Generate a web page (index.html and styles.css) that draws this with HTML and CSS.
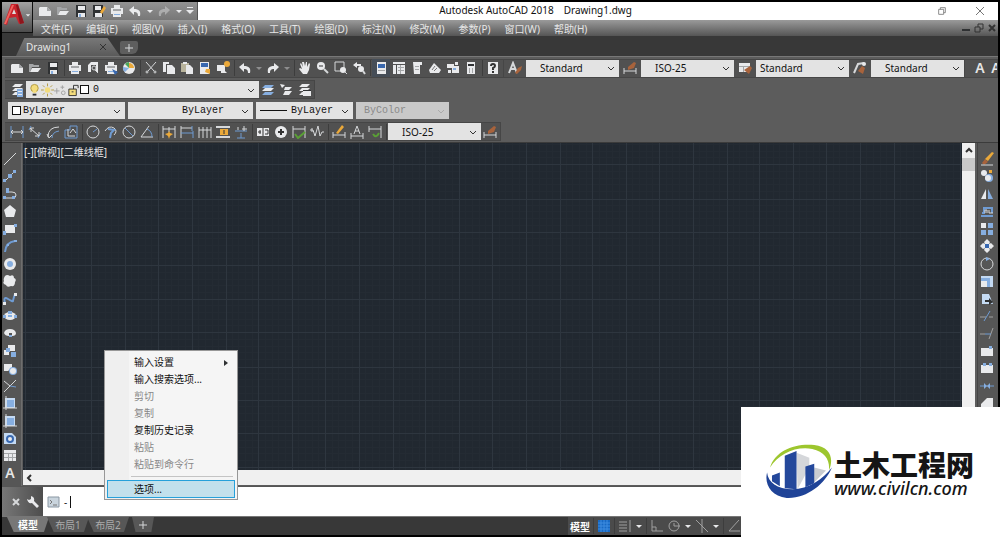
FILE: index.html
```html
<!DOCTYPE html>
<html lang="zh-CN">
<head>
    <meta charset="UTF-8">
    <meta name="viewport" content="width=device-width, initial-scale=1.0">
    <title>Autodesk AutoCAD 2018 - Drawing1.dwg</title>
    <link rel="stylesheet" href="styles.css">
</head>
<body>

<!-- Shared icons -->
<svg class="defs" aria-hidden="true">
    <symbol id="i-new" viewBox="0 0 14 14"><path class="w" d="M2 3h7l4 4v5H1V4z"/><path class="g" d="M9 3v4h4z"/></symbol>
    <symbol id="i-open" viewBox="0 0 14 14"><path class="g" d="M1 3h4l1 1h5v2H4l-2 5H1z"/><path class="w" d="M4 7h9l-3 4H2z"/></symbol>
    <symbol id="i-save" viewBox="0 0 14 14"><path class="k" d="M2 1h10v12H2z"/><path class="w" d="M4 2h7v4H4zM4 9h7v4H4z"/><path class="b" d="M5 10h2v3H5z"/></symbol>
    <symbol id="i-print" viewBox="0 0 14 14"><path class="w" d="M4 1h6v3h3v6h-2v3H3v-3H1V4h3z"/><path class="g" d="M3 5h8v2H3z"/><path class="b" d="M4 10h6v1H4z"/></symbol>
    <symbol id="i-undo" viewBox="0 0 14 14"><path class="w" d="M1 6l5-4v3c5 0 7 2 6 7h-2c0-3-1-4-4-4v3z"/></symbol>
    <symbol id="i-redo" viewBox="0 0 14 14"><path class="w" d="M13 6L8 2v3C3 5 1 7 2 12h2c0-3 1-4 4-4v3z"/></symbol>
    <symbol id="i-down" viewBox="0 0 8 8"><path class="w" d="M1 3h6L4 6z"/></symbol>
    <symbol id="i-chev" viewBox="0 0 10 10"><path class="lk" d="M2 4l3 3 3-3"/></symbol>
    <symbol id="i-restore" viewBox="0 0 12 12"><path class="lc" d="M2 4h6v6H2zM4 4V2h6v6H8"/></symbol>
    <symbol id="i-dimstyle" viewBox="0 0 14 14"><path class="l" d="M1 7v6M13 7v6M1 10h12"/><path class="r" d="M5 6l6-5 2 1-2 5-6 2z"/></symbol>
    <symbol id="i-layers" viewBox="0 0 14 14"><path class="w" d="M5 1h8l-3 3H2zM5 5h8l-3 3H2zM5 9h8l-3 3H2z"/></symbol>
    <symbol id="i-block" viewBox="0 0 14 14"><path class="bl" d="M2 2h10v10H2z"/><path class="b" d="M4 4h7v7H4z"/><path class="l" d="M3 0v14M0 12h14"/></symbol>
</svg>

<div class="app">
    <header class="top">
        <button class="app-btn" aria-label="Application menu">
            <svg class="logo-a" viewBox="0 0 22 24"><path fill="#c8232c" d="M1 21L8 1h7l6 19-5 1-3-7-7 1-2 7z"/><path fill="#f0635f" d="M9 2l2 0-5 12-3 7-2 0z"/><path fill="#8e151c" d="M13 2h2l6 18-4 1z"/><path fill="#ddd" d="M11 6l2 5H9z"/></svg>
            <svg class="i8"><use href="#i-down"/></svg>
        </button>
        <div class="top-rows">
            <div class="title-row">
                <div class="quick">
                    <button class="tb" aria-label="New"><svg><use href="#i-new"/></svg></button>
                    <button class="tb" aria-label="Open"><svg><use href="#i-open"/></svg></button>
                    <button class="tb" aria-label="Save"><svg><use href="#i-save"/></svg></button>
                    <button class="tb" aria-label="Save as"><svg viewBox="0 0 14 14"><path class="k" d="M1 1h10v12H1z"/><path class="w" d="M3 2h6v4H3zM3 9h7v4H3z"/><path class="o" d="M8 8l4-6 2 2-4 6z"/></svg></button>
                    <button class="tb" aria-label="Plot"><svg><use href="#i-print"/></svg></button>
                    <button class="tb" aria-label="Undo"><svg><use href="#i-undo"/></svg></button>
                    <button class="tb slim" aria-label="Undo list"><svg class="i8"><use href="#i-down"/></svg></button>
                    <button class="tb dim" aria-label="Redo"><svg><use href="#i-redo"/></svg></button>
                    <button class="tb slim" aria-label="Redo list"><svg class="i8"><use href="#i-down"/></svg></button>
                    <button class="tb slim" aria-label="Customize"><svg class="i8" viewBox="0 0 8 8"><path class="w" d="M1 0h6v1H1zM0 3h8L4 7z"/></svg></button>
                </div>
                <h1 class="title"><span>Autodesk AutoCAD 2018</span><span>Drawing1.dwg</span></h1>
                <div class="win-btns">
                    <button class="tb" aria-label="Restore"><svg class="i10"><use href="#i-restore"/></svg></button>
                    <button class="tb" aria-label="Close"><svg class="i10" viewBox="0 0 10 10"><path class="lc" d="M1 1l8 8M9 1L1 9"/></svg></button>
                </div>
            </div>
            <nav class="menubar">
                <a href="#">文件(F)</a><a href="#">编辑(E)</a><a href="#">视图(V)</a><a href="#">插入(I)</a><a href="#">格式(O)</a><a href="#">工具(T)</a><a href="#">绘图(D)</a><a href="#">标注(N)</a><a href="#">修改(M)</a><a href="#">参数(P)</a><a href="#">窗口(W)</a><a href="#">帮助(H)</a>
                <div class="doc-btns">
                    <button aria-label="Minimize drawing"><svg class="i10" viewBox="0 0 10 10"><path class="k" d="M1 6h8v2H1z"/></svg></button>
                    <button aria-label="Restore drawing"><svg class="i10" viewBox="0 0 10 10"><path class="lk" d="M1 4h5v5H1zM4 4V1h5v5H6"/></svg></button>
                    <button aria-label="Close drawing"><svg class="i10" viewBox="0 0 10 10"><path class="lk thick" d="M2 2l6 6M8 2L2 8"/></svg></button>
                </div>
            </nav>
        </div>
    </header>

    <!-- Drawing tabs -->
    <div class="file-tabs">
        <button class="file-tab"><span>Drawing1</span><svg class="i10" viewBox="0 0 10 10"><path class="lk" d="M2 2l6 6M8 2L2 8"/></svg></button>
        <button class="file-add" aria-label="New drawing"><svg class="i8" viewBox="0 0 8 8"><path class="l" d="M4 0v8M0 4h8"/></svg></button>
    </div>

    <!-- Standard and styles toolbars -->
    <div class="row">
        <div class="bar">
            <button class="tb" aria-label="New"><svg><use href="#i-new"/></svg></button>
            <button class="tb" aria-label="Open"><svg><use href="#i-open"/></svg></button>
            <button class="tb" aria-label="Save"><svg><use href="#i-save"/></svg></button>
            <i class="sep"></i>
            <button class="tb" aria-label="Plot"><svg><use href="#i-print"/></svg></button>
            <button class="tb" aria-label="Preview"><svg viewBox="0 0 14 14"><path class="w" d="M2 11V4l3-3h7v10h-2V4H5v7z"/><circle class="l" cx="8" cy="7" r="2"/><path class="l" d="M9 9l3 3"/></svg></button>
            <button class="tb" aria-label="Publish"><svg><use href="#i-print"/><path class="db" d="M8 8l6 3-3 3z"/></svg></button>
            <button class="tb" aria-label="3D print"><svg viewBox="0 0 14 14"><circle class="w" cx="7" cy="7" r="6"/><path class="gn" d="M7 7L3 3a5 5 0 0 1 4-2z"/><path class="o" d="M7 7V2a5 5 0 0 1 5 5z"/><path class="b" d="M7 7l-4 4a5 5 0 0 1-2-5z"/></svg></button>
            <i class="sep"></i>
            <button class="tb" aria-label="Cut"><svg viewBox="0 0 14 14"><path class="l" d="M2 1l8 9M12 1L4 10"/><circle class="l" cx="3" cy="11" r="1"/><circle class="l" cx="11" cy="11" r="1"/></svg></button>
            <button class="tb" aria-label="Copy"><svg viewBox="0 0 14 14"><path class="w" d="M1 1h6v2H4v8H1zM5 4h5l3 3v6H5z"/></svg></button>
            <button class="tb" aria-label="Paste"><svg viewBox="0 0 14 14"><path class="t" d="M1 2h8v9H1z"/><path class="w" d="M3 1h4v2H3zM6 4h4l3 3v6H6z"/></svg></button>
            <button class="tb" aria-label="Match properties"><svg viewBox="0 0 14 14"><path class="w" d="M2 1h9v12H2z"/><path class="db" d="M3 2h7v4H3z"/><path class="o" d="M8 8h4v5l-5-2z"/></svg></button>
            <button class="tb" aria-label="Block editor"><svg viewBox="0 0 14 14"><path class="w" d="M1 4h8v6l2 2H5v-2H1z"/><circle class="o" cx="11" cy="3" r="3"/></svg></button>
            <i class="sep"></i>
            <button class="tb" aria-label="Undo"><svg><use href="#i-undo"/></svg></button>
            <button class="tb arrow dim" aria-label="Undo list"><svg class="i8"><use href="#i-down"/></svg></button>
            <button class="tb" aria-label="Redo"><svg><use href="#i-redo"/></svg></button>
            <button class="tb arrow dim" aria-label="Redo list"><svg class="i8"><use href="#i-down"/></svg></button>
            <i class="sep"></i>
            <button class="tb" aria-label="Pan"><svg viewBox="0 0 14 14"><path class="w" d="M4 8L2 3l1-1 2 4-1-5h2l1 4 1-4h1v5l2-4 1 1-1 6-2 4H5L1 8l1-1z"/></svg></button>
            <button class="tb" aria-label="Zoom"><svg viewBox="0 0 14 14"><circle class="w" cx="5" cy="5" r="4"/><path class="lk" d="M3 5h4"/><path class="l thick" d="M8 8l4 4"/></svg></button>
            <button class="tb" aria-label="Zoom window"><svg viewBox="0 0 14 14"><path class="l" d="M1 1h9v9H1z"/><circle class="w" cx="9" cy="9" r="3"/><path class="l" d="M11 11l2 2"/></svg></button>
            <button class="tb" aria-label="Zoom previous"><svg viewBox="0 0 14 14"><path class="w" d="M1 4l4-3v2h4v2H5v2z"/><circle class="w" cx="9" cy="8" r="3"/><path class="l thick" d="M11 10l2 3"/></svg></button>
            <i class="sep"></i>
            <button class="tb on" aria-label="Properties"><svg viewBox="0 0 14 14"><path class="w" d="M3 1h9v12H3z"/><path class="db" d="M4 3h7v4H4z"/><path class="g" d="M4 9h7v1H4z"/></svg></button>
            <button class="tb" aria-label="Design center"><svg viewBox="0 0 14 14"><path class="w" d="M1 1h12v2H1zM1 4h3v9H1zM5 4h8v9H5z"/><path class="g" d="M6 6h6v1H6zM6 9h6v1H6zM8 4h1v9H8z"/></svg></button>
            <button class="tb" aria-label="Tool palettes"><svg viewBox="0 0 14 14"><path class="w" d="M3 1h9v3h-2v9H4z"/><path class="g" d="M5 5h4v1H5zM5 8h4v1H5z"/></svg></button>
            <button class="tb" aria-label="Sheet set"><svg viewBox="0 0 14 14"><path class="w" d="M1 9l5-7 7 7-2 3H2z"/><path class="lc" d="M4 9l3-4M6 10l3-3"/></svg></button>
            <button class="tb" aria-label="Markup"><svg viewBox="0 0 14 14"><path class="w" d="M1 3h7v4H1zM6 5h7v7H6zM2 9h3v3H2z"/><path class="b" d="M7 7h3v2H7z"/><path class="w" d="M9 1h3v3H9z"/></svg></button>
            <button class="tb" aria-label="Calculator"><svg viewBox="0 0 14 14"><path class="w" d="M3 1h8v12H3z"/><path class="k" d="M4 3h6v2H4z"/><path class="g" d="M5 7h1v5H5zM8 7h1v5H8z"/></svg></button>
            <i class="sep"></i>
            <button class="tb" aria-label="Help"><svg viewBox="0 0 14 14"><path class="w" d="M2 1h10v12H2z"/><path class="lk thick" d="M5 5q0-2 2-2t2 2q0 1-2 2v2M7 10v2"/></svg></button>
        </div>
        <div class="bar styles">
            <button class="tb" aria-label="Text style"><svg viewBox="0 0 14 14"><path class="l thick" d="M1 12L5 2l4 10M3 8h4"/><path class="r" d="M7 12l3-5 4-2-1 4-4 4z"/></svg></button>
            <div class="combo"><select class="pad-m" aria-label="Text style"><option>Standard</option></select><svg class="i10"><use href="#i-chev"/></svg></div>
            <button class="tb" aria-label="Dimension style"><svg><use href="#i-dimstyle"/></svg></button>
            <div class="combo"><select class="pad-m" aria-label="Dimension style"><option>ISO-25</option></select><svg class="i10"><use href="#i-chev"/></svg></div>
            <button class="tb" aria-label="Table style"><svg viewBox="0 0 14 14"><path class="w" d="M1 2h11v9H1z"/><path class="g" d="M1 5h11v1H1zM5 5h1v6H5z"/><path class="r" d="M6 9l6-4 2 2-3 6z"/></svg></button>
            <div class="combo"><select class="pad-s" aria-label="Table style"><option>Standard</option></select><svg class="i10"><use href="#i-chev"/></svg></div>
            <button class="tb" aria-label="Multileader style"><svg viewBox="0 0 14 14"><path class="l thick" d="M1 12l4-9 6-1"/><circle class="w" cx="11" cy="3" r="2"/><path class="r" d="M5 10l4-5 3 2-2 6z"/></svg></button>
            <div class="combo"><select class="pad-m" aria-label="Multileader style"><option>Standard</option></select><svg class="i10"><use href="#i-chev"/></svg></div>
        </div>
        <div class="bar text-bar">
            <button class="letter">A</button><button class="letter">A</button>
        </div>
    </div>

    <!-- Layers -->
    <div class="row">
        <div class="bar">
            <button class="tb" aria-label="Layer properties"><svg><use href="#i-layers"/><path class="b" d="M7 6h6v8H7z"/><path class="w" d="M8 8h4v1H8zM8 11h4v1H8z"/></svg></button>
            <div class="combo layer">
                <svg viewBox="0 0 14 14"><circle class="y" cx="7" cy="5" r="4"/><circle class="ly" cx="7" cy="5" r="4"/><path class="y" d="M5 8h4v2H5z"/><path class="k" d="M5 11h4v2H5z"/></svg>
                <svg viewBox="0 0 14 14"><circle class="y" cx="7" cy="7" r="3"/><path class="ly" d="M7 0v3M7 11v3M0 7h3M11 7h3M2 2l2 2M10 10l2 2M12 2l-2 2M4 10l-2 2"/></svg>
                <svg viewBox="0 0 14 14"><path class="lg" d="M3 5v6M0 8h6M9 2v4M7 4h4"/><circle class="lg" cx="10" cy="10" r="2"/></svg>
                <svg viewBox="0 0 14 14"><path class="y" d="M2 6h8v7H2z"/><path class="lk" d="M2 6h8v7H2zM7 6V2h5v3M5 9h2"/></svg>
                <i class="swatch"></i>
                <select class="mono" aria-label="Layer"><option>0</option></select><svg class="i10"><use href="#i-chev"/></svg>
            </div>
            <button class="tb" aria-label="Make current"><svg viewBox="0 0 14 14"><path class="b" d="M4 2h9l-3 3H1zM4 9h9l-3 3H1z"/><path class="w" d="M4 5h9l-3 3H1z"/></svg></button>
            <button class="tb" aria-label="Layer previous"><svg viewBox="0 0 14 14"><path class="w" d="M1 1l5 1-3 3zM6 4h7l-3 3H5zM6 8h7l-3 4H4z"/></svg></button>
            <button class="tb" aria-label="Layer states"><svg><use href="#i-layers"/><path class="w" d="M6 8h8v5H6z"/><path class="k" d="M6 7h8v1H6z"/></svg></button>
        </div>
    </div>

    <!-- Properties -->
    <div class="row props">
        <div class="combo c-color"><i class="swatch"></i><select class="mono" aria-label="Color"><option>ByLayer</option></select><svg class="i10"><use href="#i-chev"/></svg></div>
        <div class="combo c-type"><select class="mono pad-l" aria-label="Linetype"><option>ByLayer</option></select><svg class="i10"><use href="#i-chev"/></svg></div>
        <div class="combo c-weight"><i class="stroke"></i><select class="mono" aria-label="Lineweight"><option>ByLayer</option></select><svg class="i10"><use href="#i-chev"/></svg></div>
        <div class="combo off"><select class="mono pad-m" aria-label="Plot style" disabled><option>ByColor</option></select><svg class="i10"><use href="#i-chev"/></svg></div>
    </div>

    <!-- Dimension toolbar -->
    <div class="row">
        <div class="bar">
            <button class="tb" aria-label="Linear"><svg viewBox="0 0 14 14"><path class="lb" d="M1 1v12M13 1v12"/><path class="l" d="M1 7h12M3 5L1 7l2 2M11 5l2 2-2 2"/></svg></button>
            <button class="tb" aria-label="Aligned"><svg viewBox="0 0 14 14"><path class="lb" d="M3 1L1 5M13 8l-3 5"/><path class="l" d="M2 3l9 8M3 7V3h3M11 7v4H7"/></svg></button>
            <button class="tb" aria-label="Arc length"><svg viewBox="0 0 14 14"><path class="l" d="M2 12Q2 2 13 2M1 9l2 4 3-3"/><path class="lb" d="M6 13q0-6 7-7"/></svg></button>
            <button class="tb" aria-label="Ordinate"><svg viewBox="0 0 14 14"><path class="lb" d="M1 13V5h5V1h7v12z"/><path class="l" d="M4 4v7h7M6 8l3-4 3 4"/></svg></button>
            <i class="sep"></i>
            <button class="tb" aria-label="Radius"><svg viewBox="0 0 14 14"><circle class="l" cx="7" cy="7" r="6"/><path class="lb" d="M7 7l4-3"/></svg></button>
            <button class="tb" aria-label="Jogged"><svg viewBox="0 0 14 14"><path class="l" d="M1 6q4-6 9-3 4 3 0 7"/><path class="lb thick" d="M4 4l6 1-3 3-1 5"/></svg></button>
            <button class="tb" aria-label="Diameter"><svg viewBox="0 0 14 14"><circle class="l" cx="7" cy="7" r="6"/><path class="lb" d="M3 3l8 8"/></svg></button>
            <button class="tb" aria-label="Angular"><svg viewBox="0 0 14 14"><path class="l" d="M9 1L1 12h12"/><path class="lb" d="M7 4q5 2 5 8"/></svg></button>
            <i class="sep"></i>
            <button class="tb" aria-label="Quick dimension"><svg viewBox="0 0 14 14"><path class="l" d="M1 1v12M13 1v12M1 4h12M7 2v5"/><path class="o" d="M7 6l1 2 3 1-3 2-1 3-1-3-3-2 3-1z"/></svg></button>
            <button class="tb" aria-label="Baseline"><svg viewBox="0 0 14 14"><path class="l" d="M1 1v12M1 3h11"/><path class="lb" d="M12 1v5M1 8h12M13 6v7"/></svg></button>
            <button class="tb" aria-label="Continue"><svg viewBox="0 0 14 14"><path class="l" d="M1 2v11M5 2v11M9 2v11M13 2v11M1 5h12"/></svg></button>
            <button class="tb" aria-label="Dimension space"><svg viewBox="0 0 14 14"><path class="l thick" d="M0 2h14M0 12h14"/><path class="o" d="M4 4h8v6H4z"/><path class="lk" d="M8 5v4"/></svg></button>
            <button class="tb" aria-label="Dimension break"><svg viewBox="0 0 14 14"><path class="lb" d="M1 6h12M7 13V8M3 13h8"/><path class="l" d="M4 2v3M10 1v5M8 4h5"/></svg></button>
            <i class="sep"></i>
            <button class="tb" aria-label="Tolerance"><svg viewBox="0 0 14 14"><path class="w" d="M1 3h12v8H1z"/><path class="lk" d="M2 7h3M4 5v4M7 3v8M9 5h3v4H9"/></svg></button>
            <button class="tb" aria-label="Center mark"><svg viewBox="0 0 14 14"><circle class="w" cx="7" cy="7" r="6"/><path class="lk thick" d="M7 4v6M4 7h6"/></svg></button>
            <button class="tb" aria-label="Inspection"><svg viewBox="0 0 14 14"><path class="l" d="M1 1v12M13 1v12M1 4h12"/><path class="lgn" d="M3 9l3 4 7-6"/></svg></button>
            <button class="tb" aria-label="Jogged linear"><svg viewBox="0 0 14 14"><path class="l" d="M0 5h3l2 6 3-10 2 10 2-4h2M2 3v4"/></svg></button>
            <i class="sep"></i>
            <button class="tb" aria-label="Dimension edit"><svg viewBox="0 0 14 14"><path class="l" d="M1 7v6M13 7v6M1 10h12"/><path class="o" d="M4 8l6-8 2 2-6 7z"/></svg></button>
            <button class="tb" aria-label="Dimension text edit"><svg viewBox="0 0 14 14"><path class="l" d="M1 8v6M13 8v6M1 11h12M4 9l3-8 3 8M5 6h4"/></svg></button>
            <button class="tb" aria-label="Dimension update"><svg viewBox="0 0 14 14"><path class="l" d="M1 1v6M13 1v12M1 4h12"/><path class="lgn" d="M5 9q3 5 6-1"/></svg></button>
            <i class="sep"></i>
            <div class="combo"><select class="pad-m" aria-label="Dimension style"><option>ISO-25</option></select><svg class="i10"><use href="#i-chev"/></svg></div>
            <button class="tb" aria-label="Dimension style manager"><svg><use href="#i-dimstyle"/></svg></button>
        </div>
    </div>

    <main class="work">
        <!-- Draw -->
        <div class="side">
            <button aria-label="Line"><svg viewBox="0 0 14 14"><path class="l" d="M1 13L13 1"/></svg></button>
            <button aria-label="Construction line"><svg viewBox="0 0 14 14"><path class="l" d="M1 13L13 1"/><path class="b" d="M0 10h3v3H0zM5 5h4v4H5zM10 1h3v3h-3z"/></svg></button>
            <button aria-label="Polyline"><svg viewBox="0 0 14 14"><path class="l" d="M1 11h9q3 0 3-3T9 5H4"/><path class="b" d="M3 1h3v5H3zM0 9h3v3H0zM9 9h3v3H9z"/></svg></button>
            <button aria-label="Polygon"><svg viewBox="0 0 14 14"><path class="w" d="M7 1l6 5-2 7H3L1 6z"/></svg></button>
            <button aria-label="Rectangle"><svg viewBox="0 0 14 14"><path class="w" d="M2 3h10v8H2z"/><path class="b" d="M0 9h3v4H0zM11 2h3v3h-3z"/></svg></button>
            <button aria-label="Arc"><svg viewBox="0 0 14 14"><path class="lb thick" d="M2 13Q3 3 12 2"/><path class="b" d="M11 1h3v2h-3zM4 5h2v2H4z"/></svg></button>
            <button aria-label="Circle"><svg viewBox="0 0 14 14"><circle class="w" cx="7" cy="7" r="6"/><circle class="b" cx="7" cy="7" r="3"/></svg></button>
            <button aria-label="Revision cloud"><svg viewBox="0 0 14 14"><path class="w" d="M2 2q2-2 5 0 4-2 4 2 3 1 1 4 0 5-4 4-4 2-5-1-4-1-2-4-1-2 1-5z"/></svg></button>
            <button aria-label="Spline"><svg viewBox="0 0 14 14"><path class="lb thick" d="M2 11Q0 4 5 7t5 2 2-7"/><path class="w" d="M0 10h3v3H0zM11 1h3v3h-3z"/></svg></button>
            <button aria-label="Ellipse"><svg viewBox="0 0 14 14"><ellipse class="w" cx="7" cy="7" rx="6" ry="4"/><path class="b" d="M5 2h4v3H5zM0 6h3v3H0zM5 6h4v2H5zM11 6h3v3h-3z"/></svg></button>
            <button aria-label="Ellipse arc"><svg viewBox="0 0 14 14"><path class="w" d="M1 7q1-4 6-4t6 4q0 3-4 3V7H6v3Q2 10 1 7z"/><path class="b" d="M6 9h3v2H6z"/></svg></button>
            <button aria-label="Insert block"><svg viewBox="0 0 14 14"><path class="w" d="M5 1h7v6H5zM1 6h5v5H1z"/><path class="b" d="M3 4h4v4H3zM8 8h5v5H8z"/></svg></button>
            <button aria-label="Make block"><svg viewBox="0 0 14 14"><path class="w" d="M1 3h8v4l-4 3H1z"/><circle class="b" cx="10" cy="10" r="4"/><circle class="w" cx="10" cy="10" r="3"/></svg></button>
            <button aria-label="Point"><svg viewBox="0 0 14 14"><path class="l" d="M1 13L13 1M1 2l6 5"/><path class="lb" d="M7 7l6 1"/></svg></button>
            <button aria-label="Hatch"><svg><use href="#i-block"/></svg></button>
            <button aria-label="Gradient"><svg><use href="#i-block"/></svg></button>
            <button aria-label="Region"><svg viewBox="0 0 14 14"><path class="bl" d="M1 2h8l4 4v7H1z"/><circle class="db" cx="7" cy="8" r="4"/><circle class="w" cx="7" cy="8" r="2"/></svg></button>
            <button aria-label="Table"><svg viewBox="0 0 14 14"><path class="w" d="M1 2h12v11H1z"/><path class="g" d="M1 5h12v1H1zM1 9h12v1H1zM5 5h1v8H5zM9 5h1v8H9z"/></svg></button>
            <button class="letter">A</button>
        </div>

        <div class="view">
            <div class="canvas">
                <svg class="grid" width="100%" height="100%" aria-hidden="true">
                    <defs>
                        <pattern id="grid" x="35" y="55" width="167" height="168" patternUnits="userSpaceOnUse">
                            <path class="minor" d="M7 0v168M13 0v168M20 0v168M27 0v168M40 0v168M47 0v168M53 0v168M60 0v168M73 0v168M80 0v168M87 0v168M93 0v168M107 0v168M113 0v168M120 0v168M127 0v168M140 0v168M147 0v168M154 0v168M160 0v168"/>
                            <path class="minor" d="M0 7h167M0 13h167M0 20h167M0 27h167M0 40h167M0 47h167M0 54h167M0 60h167M0 74h167M0 81h167M0 87h167M0 94h167M0 107h167M0 114h167M0 121h167M0 127h167M0 141h167M0 148h167M0 154h167M0 161h167"/>
                            <path class="major" d="M1 0v168M33 0v168M67 0v168M100 0v168M134 0v168M0 1h167M0 34h167M0 67h167M0 101h167M0 134h167"/>
                        </pattern>
                    </defs>
                    <rect width="100%" height="100%" fill="url(#grid)"/>
                </svg>
                <span class="view-label">[-][俯视][二维线框]</span>
            </div>
            <div class="hscroll"><svg class="i10" viewBox="0 0 10 10"><path class="lk thick" d="M6 2L3 5l3 3"/></svg></div>
            <div class="vscroll"><svg class="i10" viewBox="0 0 10 10"><path class="lk thick" d="M2 6l3-3 3 3"/></svg><i class="thumb"></i></div>
        </div>

        <!-- Modify -->
        <div class="side right">
            <button aria-label="Erase"><svg viewBox="0 0 14 14"><path class="r" d="M2 11l3-4 3 3-4 3z"/><path class="o" d="M5 7l7-7 2 1-6 8z"/><path class="l" d="M1 13h12"/></svg></button>
            <button aria-label="Copy object"><svg viewBox="0 0 14 14"><circle class="w" cx="4" cy="4" r="3"/><circle class="b" cx="9" cy="9" r="4"/><circle class="w" cx="8" cy="9" r="3"/><path class="o" d="M9 1h3v3H9z"/></svg></button>
            <button aria-label="Mirror"><svg viewBox="0 0 14 14"><path class="w" d="M6 2v10H1z"/><path class="b" d="M8 2v10h5z"/></svg></button>
            <button aria-label="Offset"><svg viewBox="0 0 14 14"><path class="lb thick" d="M1 12h12M2 9h2V4h8v5"/><path class="l" d="M5 9V6h2v3M9 6v3h4"/></svg></button>
            <button aria-label="Array"><svg viewBox="0 0 14 14"><path class="w" d="M1 1h5v5H1z"/><path class="b" d="M8 1h5v5H8zM1 8h5v5H1zM8 8h5v5H8z"/></svg></button>
            <button aria-label="Move"><svg viewBox="0 0 14 14"><path class="w" d="M7 0l3 3-1 2H5L4 3zM7 14l3-3-1-2H5l-1 2zM0 7l3-3 2 1v4l-2 1zM14 7l-3-3-2 1v4l2 1z"/><path class="db" d="M5 5h4v4H5z"/></svg></button>
            <button aria-label="Rotate"><svg viewBox="0 0 14 14"><circle class="l" cx="7" cy="7" r="6"/><path class="b" d="M6 0l4 2-4 2z"/></svg></button>
            <button aria-label="Scale"><svg viewBox="0 0 14 14"><path class="bl" d="M1 2h12v11H1z"/><path class="b" d="M1 4h9v9H1z"/><path class="w" d="M1 7h6v6H1z"/></svg></button>
            <button aria-label="Stretch"><svg viewBox="0 0 14 14"><path class="bl" d="M2 2h7l4 10H2z"/><path class="k" d="M5 8h4V6l4 4-4 3v-3H5z"/></svg></button>
            <button aria-label="Trim"><svg viewBox="0 0 14 14"><path class="lg" d="M0 8h6M9 8h4"/><path class="lb" d="M4 12L10 2"/></svg></button>
            <button aria-label="Extend"><svg viewBox="0 0 14 14"><path class="lg" d="M0 8h5M9 13l4-11"/><path class="lb" d="M5 8h6"/></svg></button>
            <button aria-label="Break at point"><svg viewBox="0 0 14 14"><path class="w" d="M1 4h12v8H1z"/><path class="b" d="M9 2h3v3H9z"/></svg></button>
            <button aria-label="Break"><svg viewBox="0 0 14 14"><path class="w" d="M1 4h12v8H1z"/><path class="b" d="M3 2h3v3H3zM9 2h3v3H9z"/></svg></button>
            <button aria-label="Join"><svg viewBox="0 0 14 14"><path class="lb" d="M0 7h14"/><path class="b" d="M4 4l3 3-3 3zM10 4L7 7l3 3z"/></svg></button>
            <button aria-label="Chamfer"><svg viewBox="0 0 14 14"><path class="w" d="M1 13V8l6-6h6v11z"/></svg></button>
            <button aria-label="Fillet"><svg viewBox="0 0 14 14"><path class="w" d="M1 13Q1 2 13 2v11z"/></svg></button>
            <button aria-label="Blend"><svg viewBox="0 0 14 14"><path class="lb" d="M1 12q6 0 6-5t6-5"/></svg></button>
            <button aria-label="Explode"><svg viewBox="0 0 14 14"><path class="o" d="M7 1l2 4 4 2-4 2-2 4-2-4-4-2 4-2z"/></svg></button>
            <button aria-label="Draw order"><svg><use href="#i-layers"/></svg></button>
        </div>
    </main>

    <!-- Command line -->
    <div class="command">
        <div class="cmd-tools">
            <button aria-label="Close command line"><svg class="i10" viewBox="0 0 10 10"><path class="l thick" d="M2 2l6 6M8 2L2 8"/></svg></button>
            <button aria-label="Command settings"><svg viewBox="0 0 14 14"><path class="w" d="M1 4l2 1 2-1V1q4 1 3 5l5 5-2 2-5-5Q2 9 1 4z"/></svg></button>
        </div>
        <label class="cmd-line">
            <svg viewBox="0 0 14 14"><path fill="#c9d4dd" stroke="#8a97a3" d="M1 2h11v10H1z"/><path class="lc" d="M3 5l2 2-2 2M6 10h4"/></svg>
            <span>-</span><i class="caret"></i>
            <input type="text" aria-label="Command">
        </label>
    </div>

    <footer class="bottom">
        <button class="layout-tab active">模型</button>
        <button class="layout-tab">布局1</button>
        <button class="layout-tab">布局2</button>
        <button class="layout-tab add" aria-label="New layout"><svg class="i8" viewBox="0 0 8 8"><path class="l" d="M4 0v8M0 4h8"/></svg></button>
        <div class="status">
            <button class="model">模型</button>
            <i class="sep"></i>
            <button aria-label="Grid"><svg viewBox="0 0 14 14"><path fill="#1769c4" d="M1 1h12v12H1z"/><path stroke="#3f8de0" d="M4 1v12M7 1v12M10 1v12M1 4h12M1 7h12M1 10h12"/></svg></button>
            <i class="sep"></i>
            <button aria-label="Snap"><svg viewBox="0 0 14 14"><path class="lg" d="M1 3h8M1 6h8M1 9h8M1 12h8M12 1v12"/></svg></button>
            <button aria-label="Snap list"><svg class="i8"><use href="#i-down"/></svg></button>
            <i class="sep"></i>
            <button aria-label="Ortho"><svg viewBox="0 0 14 14"><path class="lg" d="M2 1v11h11M2 8h4v4"/></svg></button>
            <button aria-label="Polar"><svg viewBox="0 0 14 14"><circle class="lg" cx="7" cy="7" r="5"/><path class="lg" d="M7 7h6M7 7V4"/></svg></button>
            <button aria-label="Polar list"><svg class="i8"><use href="#i-down"/></svg></button>
            <button aria-label="Isoplane"><svg viewBox="0 0 14 14"><path class="lg" d="M1 1l12 12M7 0v14"/></svg></button>
            <button aria-label="Isoplane list"><svg class="i8"><use href="#i-down"/></svg></button>
            <i class="sep"></i>
            <button aria-label="Object snap tracking"><svg viewBox="0 0 14 14"><path class="lg" d="M12 1L2 12h11"/></svg></button>
        </div>
    </footer>

    <!-- Command line context menu -->
    <div class="ctx" role="menu">
        <button role="menuitem">输入设置<svg class="i8" viewBox="0 0 8 8"><path class="k" d="M2 1l4 3-4 3z"/></svg></button>
        <button role="menuitem">输入搜索选项...</button>
        <button role="menuitem" disabled>剪切</button>
        <button role="menuitem" disabled>复制</button>
        <button role="menuitem">复制历史记录</button>
        <button role="menuitem" disabled>粘贴</button>
        <button role="menuitem" disabled>粘贴到命令行</button>
        <hr>
        <button role="menuitem" class="hot">选项...</button>
    </div>

    <!-- Site badge -->
    <a class="badge" href="#">
        <svg viewBox="0 0 70 58" aria-hidden="true">
            <path fill="#d5d7da" d="M32 9l13 5v10l-12 22z"/><path fill="#c9ccd0" d="M50 24l12 3-14 14z"/>
            <path fill="#24489b" d="M20 12l12-5v39l-12-1zM41 23l9-3v20l-9 4zM7 32l8-3v14l-8-5z"/>
            <path fill="#9dc62e" d="M5 24C10 7 30-1 50 1c17 2 20 14 15 26C66 16 61 8 48 5 31 2 14 10 5 24z"/>
            <path fill="#1f4397" d="M2 29c-3 12 4 24 20 26 20 1 39-14 46-31-9 12-24 22-40 22C12 46 3 39 2 29z"/>
        </svg>
        <span class="badge-text"><strong>土木工程网</strong><em>www.civilcn.com</em></span>
    </a>
</div>

</body>
</html>
```
FILE: styles.css
```css
* { box-sizing: border-box; }
body { margin: 0; background: #000; font-family: "Noto Sans", "Noto Sans CJK SC", sans-serif; font-size: 10px; color: #e6e6e6; }
button, select, input { font: inherit; color: inherit; border: 0; padding: 0; background: none; }
button { display: flex; align-items: center; justify-content: center; cursor: pointer; }
a { color: inherit; text-decoration: none; }
svg { width: 14px; height: 14px; flex: none; display: block; }
.defs { position: absolute; width: 0; height: 0; }
.i8 { width: 8px; height: 8px; }
.i10 { width: 10px; height: 10px; }

/* icon paint */
.w { fill: #e9eaec; }
.g { fill: #a4a6a8; }
.k { fill: #2f3133; }
.b { fill: #86aee0; }
.bl { fill: #c4daf3; }
.db { fill: #3868b0; }
.o { fill: #eba93a; }
.r { fill: #a8633c; }
.t { fill: #b9b49c; }
.y { fill: #f3dc7c; }
.gn { fill: #4ca65c; }
.l, .lb, .lk, .lg, .lc, .ly, .lgn { fill: none; stroke: #d6d8da; }
.lb { stroke: #6f9bd2; }
.lk { stroke: #333; }
.lg { stroke: #a0a0a0; }
.lc { stroke: #777; }
.ly { stroke: #b0973e; }
.lgn { stroke: #5a9f35; stroke-width: 2; }
.thick { stroke-width: 2; }

.app { position: relative; display: flex; flex-direction: column; height: 100vh; min-height: 480px; padding: 2px; overflow: hidden; background: #000; }

/* title and menus */
.top { display: flex; background: #383838; }
.app-btn { align-self: flex-start; width: 31px; height: 31px; padding-bottom: 4px; background: linear-gradient(#a3a3a3, #4c4c4c); border-right: 1px solid #111; border-bottom: 1px solid #111; }
.logo-a { width: 22px; height: 24px; }
.app-btn .i8 { width: 6px; }
.top-rows { flex: 1; min-width: 0; }
.title-row { display: flex; height: 18px; background: #fff; }
.quick { display: flex; align-items: center; padding: 0 2px 0 3px; background: linear-gradient(#929292, #777); border-right: 1px solid #555; }
.tb { width: 18px; height: 18px; flex: none; }
.quick .slim { width: 11px; }
.dim { opacity: 0.4; }
.title { flex: 1; display: flex; justify-content: center; gap: 10px; margin: 0; padding-right: 60px; font-size: 10px; line-height: 17px; font-weight: 400; color: #111; white-space: nowrap; }
.win-btns { display: flex; gap: 20px; padding-right: 9px; }
.menubar { display: flex; align-items: center; gap: 14px; height: 16px; padding-left: 8px; background: linear-gradient(#9a9a9a, #555); white-space: nowrap; }
.doc-btns { display: flex; gap: 3px; margin-left: auto; padding-right: 1px; }

.file-tabs { display: flex; align-items: flex-end; height: 20px; padding-left: 14px; background: #383838; }
.file-tab { width: 104px; height: 18px; justify-content: space-between; padding: 0 12px 0 10px; background: linear-gradient(#787878, #5a5a5a); clip-path: polygon(8% 0, 88% 0, 100% 100%, 0 100%); }
.file-add { width: 18px; height: 13px; margin-bottom: 2px; background: #5e5e5e; border-radius: 2px 2px 6px 2px; }

/* toolbars */
.row { display: flex; align-items: center; height: 21px; padding-left: 3px; background: #5c5c5c; }
.file-tabs + .row { height: 23px; border-top: 1px solid #777; }
.bar { display: flex; align-items: center; flex: none; height: 19px; padding: 0 1px 0 3px; background: #515151; border: 1px solid #464646; border-left: 0; }
.sep { width: 1px; height: 16px; flex: none; margin: 0 1px 0 2px; background: #3d3d3d; }
.arrow { width: 10px; }
.on { background: #454d57; }
.styles { padding: 0; }
.styles .tb { width: 22px; }
.combo { display: flex; align-items: center; width: 93px; height: 17px; flex: none; padding-right: 3px; background: #e3e3e3; color: #111; }
.combo select { flex: 1; min-width: 0; height: 17px; appearance: none; }
.combo select + svg { width: 10px; margin-left: -10px; pointer-events: none; }
.pad-s { padding-left: 4px; }
.pad-m { padding-left: 14px; }
.pad-l { padding-left: 54px; }
.combo .pad-m.mono { padding-left: 8px; }
.mono { font-family: "Liberation Mono", monospace; }
.layer { width: 233px; padding-left: 2px; }
.layer svg { width: 13px; }
.swatch { width: 9px; height: 9px; flex: none; margin-right: 4px; background: #fff; border: 1px solid #111; }
.text-bar { flex: 1 1 0; min-width: 0; overflow: hidden; gap: 2px; padding-left: 8px; }
.letter { width: 14px; flex: none; font-size: 14px; line-height: 14px; font-weight: 600; }
.props { gap: 3px; padding-left: 6px; }
.c-color { width: 117px; padding-left: 4px; }
.c-color .swatch { margin-right: 2px; }
.c-type { width: 125px; }
.c-weight { width: 97px; padding-left: 4px; }
.stroke { width: 27px; height: 1px; flex: none; margin-right: 4px; background: #111; }
.off { background: #c9c9c9; color: #8a8a8a; }
.off svg { opacity: 0.2; }
.off select { opacity: 1; }

/* workspace */
.work { display: flex; flex: 1; min-height: 0; border-top: 1px solid #3b3b3b; background: #5c5c5c; }
.side { display: flex; flex-direction: column; justify-content: space-between; width: 20px; flex: none; padding: 8px 2px 5px 0; background: #565656; border-right: 1px solid #6e6e6e; }
.side button { width: 16px; height: 16px; }
.side.right { width: 21px; padding-left: 1px; border-left: 1px solid #444; border-right: 0; }
.view { display: grid; grid-template: minmax(0, 1fr) 15px / minmax(0, 1fr) 13px; flex: 1; min-width: 0; margin: 0 2px 1px 1px; }
.canvas { position: relative; overflow: hidden; background: #212830; }
.grid { position: absolute; inset: 0; width: 100%; height: 100%; }
.minor, .major { stroke: #242b33; shape-rendering: crispEdges; }
.major { stroke: #2e363f; }
.view-label { position: relative; display: block; padding: 2px 1px; line-height: 15px; }
.hscroll { grid-row: 2; display: flex; align-items: center; padding-left: 2px; background: #f0f0f0; }
.vscroll { grid-column: 2; grid-row: 1 / 3; display: flex; flex-direction: column; align-items: center; gap: 2px; padding-top: 3px; background: #f0f0f0; }
.thumb { width: 100%; height: 13px; background: #c9c9c9; }

/* command line */
.command { display: flex; height: 30px; flex: none; background: #fff; border-top: 1px solid #555; }
.cmd-tools { display: flex; align-items: center; gap: 5px; width: 41px; flex: none; padding-left: 9px; background: linear-gradient(90deg, #777, #4d4d4d); }
.cmd-line { display: flex; align-items: center; flex: 1; gap: 3px; padding-left: 4px; color: #222; }
.cmd-line input { flex: 1; outline: none; }
.caret { width: 1px; height: 12px; background: #111; }

.bottom { display: flex; height: 19px; flex: none; padding-left: 5px; background: #383838; border-top: 1px solid #777; }
.layout-tab { width: 42px; height: 15px; margin-right: -2px; color: #aaa; background: #575757; clip-path: polygon(0 0, 100% 0, 88% 100%, 16% 100%); }
.layout-tab.active { color: #fff; font-weight: 700; background: #777; }
.layout-tab.add { width: 22px; margin-left: 5px; }
.status { display: flex; align-items: center; flex: 1; gap: 3px; margin-left: 416px; padding-left: 2px; background: #4b4b4b; }
.status .sep { margin: 0; }
.model { font-weight: 700; color: #fff; }

/* popup menu */
.ctx { position: absolute; left: 104px; bottom: 37px; width: 134px; padding: 3px 2px 1px; background: linear-gradient(90deg, #efefef 24px, #f5f5f5 24px); border: 1px solid #979797; color: #111; }
.ctx button { justify-content: space-between; width: 100%; height: 17px; padding: 0 5px 0 27px; line-height: 17px; }
.ctx button:disabled { color: #888; }
.ctx hr { height: 1px; margin: 3px 2px 3px 24px; border: 0; background: #c4c4c4; }
.ctx .hot { height: 18px; background: #c2e0ec; border: 1px solid #26a0da; padding-left: 26px; }

/* badge */
.badge { position: absolute; right: 0; bottom: 0; display: flex; align-items: center; width: 259px; height: 130px; padding-left: 24px; background: #fff; color: #151515; white-space: nowrap; }
.badge > svg { width: 69px; height: 57px; }
.badge-text { display: flex; flex-direction: column; padding-top: 4px; }
.badge strong { font-family: "Noto Sans CJK SC", sans-serif; font-size: 28px; line-height: 28px; font-weight: 900; }
.badge em { font-size: 18px; line-height: 20px; font-weight: 500; }
```
